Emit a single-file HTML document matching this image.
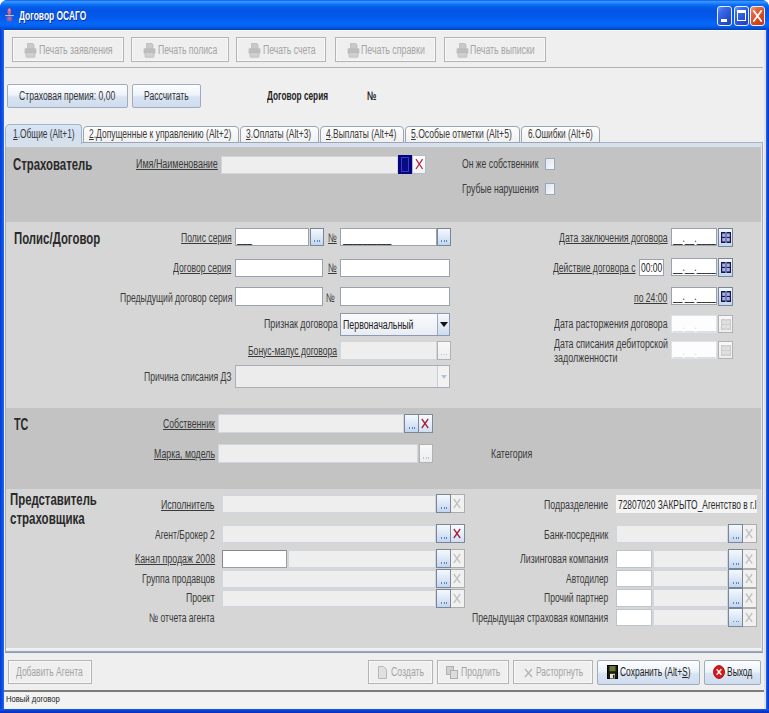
<!DOCTYPE html>
<html lang="ru"><head><meta charset="utf-8"><title>Договор ОСАГО</title>
<style>
html,body{margin:0;padding:0;}
body{width:769px;height:713px;position:relative;overflow:hidden;background:#fff;font-family:"Liberation Sans",sans-serif;}
div{position:absolute;box-sizing:border-box;}
.t{position:absolute;white-space:nowrap;transform-origin:0 50%;display:inline-block;}
.btn{border:1px solid #9eacbf;border-radius:2px;background:linear-gradient(#fdfeff 0%,#eef3fa 45%,#d9e4f2 55%,#cfdcee 100%);}
.btnd{border:1px solid #b9b9b9;border-radius:2px;background:linear-gradient(#f6f6f6,#ececec);}
.fw{background:#fff;border:1px solid #9aa3ad;}
.fg{background:#eeeeee;border:1px solid #cfd6de;}
.sb{border:1px solid #7a8696;background:linear-gradient(#f3f8fd 0%,#dde8f6 50%,#c2d6ef 100%);}
.sbd{border:1px solid #b2b2b2;background:linear-gradient(#f8f8f8,#ededed);}
.fw2{background:#fff;border:1px solid #bcc4cc;}

</style></head>
<body>
<div class="" style="left:0px;top:0px;width:769px;height:713px;background:#0a3fd8;border-radius:8px 8px 0 0;"></div>
<div class="" style="left:0px;top:0px;width:769px;height:29.5px;border-radius:7px 7px 0 0;background:linear-gradient(#0058ee 0%,#3a93ff 5%,#2a8bff 9%,#0f74f8 14%,#0561ec 22%,#0456e4 32%,#0458ea 55%,#0560f4 68%,#0668fb 78%,#0560ee 88%,#0450d4 94%,#0340b4 100%);"></div>
<div class="" style="left:0px;top:29px;width:3.5px;height:684px;background:linear-gradient(90deg,#0a3ad4,#0b54e8 60%,#2a6bf0);"></div>
<div class="" style="left:765.5px;top:29px;width:3.5px;height:684px;background:linear-gradient(90deg,#2a6bf0,#0b4fe2 40%,#0a33c0);"></div>
<div class="" style="left:0px;top:708.5px;width:769px;height:4.5px;background:linear-gradient(#1a5ff0,#0a3fd8 40%,#0a2fb0);"></div>
<div class="" style="left:3.5px;top:29.5px;width:762.0px;height:679.0px;background:#efefef;border-top:1px solid #fafafa;border-right:2.5px solid #dde1e8;"></div>
<svg style="position:absolute;left:4px;top:7px" width="11" height="16" viewBox="0 0 11 16"><ellipse cx="5.3" cy="4.6" rx="1.8" ry="3.4" fill="#d8607c"/><ellipse cx="5.3" cy="3" rx="1" ry="1.6" fill="#ee8c8c"/><rect x="1.2" y="8" width="8.6" height="1.1" fill="#c9bfe6"/><rect x="2.6" y="9.3" width="5.6" height="5.2" rx="1.5" fill="#7a5cae"/><rect x="3.8" y="10" width="3.2" height="3" fill="#a86a9a"/></svg>
<div class="" style="left:717px;top:6px;width:15px;height:20px;border:1px solid #e8eefc;border-radius:3px;background:linear-gradient(135deg,#6a9af8 0%,#3a6ae8 25%,#2a52d8 60%,#1c3fc0 100%);"></div>
<div class="" style="left:734px;top:6px;width:15px;height:20px;border:1px solid #e8eefc;border-radius:3px;background:linear-gradient(135deg,#6a9af8 0%,#3a6ae8 25%,#2a52d8 60%,#1c3fc0 100%);"></div>
<div class="" style="left:750px;top:6px;width:15px;height:20px;border:1px solid #e8eefc;border-radius:3px;background:linear-gradient(135deg,#f0a080 0%,#e26a40 25%,#d8481c 60%,#c03a14 100%);"></div>
<div class="" style="left:721px;top:19px;width:6px;height:3px;background:#fff;"></div>
<div class="" style="left:737px;top:10px;width:9px;height:11px;border:1.5px solid #fff;border-top:3px solid #fff;"></div>
<svg style="position:absolute;left:752px;top:9px" width="11" height="14" viewBox="0 0 11 14"><path d="M1.8 2 L9.2 12 M9.2 2 L1.8 12" stroke="#fff" stroke-width="1.8" fill="none" stroke-linecap="round"/></svg>
<div class="" style="left:5px;top:67px;width:758px;height:1px;background:#b0b0b0;"></div>
<div class="" style="left:12px;top:37px;width:112px;height:25px;border:1px solid #b4b4b4;box-shadow:inset 0 0 0 1px #f8f8f8;background:#efefef;"><svg style="position:absolute;left:11px;top:4.5px" width="13" height="15" viewBox="0 0 13 15"><path d="M3.5 0.5 h5.5 l1 1 v4 h-6.5z" fill="#c9c9c9" stroke="#b0b0b0" stroke-width=".6"/><rect x="0.6" y="5.2" width="11.8" height="5.6" rx="1.2" fill="#bdbdbd"/><rect x="2" y="9.5" width="9" height="4.8" rx=".8" fill="#cfcfcf" stroke="#b4b4b4" stroke-width=".6"/></svg></div>
<div class="" style="left:131px;top:37px;width:98px;height:25px;border:1px solid #b4b4b4;box-shadow:inset 0 0 0 1px #f8f8f8;background:#efefef;"><svg style="position:absolute;left:11px;top:4.5px" width="13" height="15" viewBox="0 0 13 15"><path d="M3.5 0.5 h5.5 l1 1 v4 h-6.5z" fill="#c9c9c9" stroke="#b0b0b0" stroke-width=".6"/><rect x="0.6" y="5.2" width="11.8" height="5.6" rx="1.2" fill="#bdbdbd"/><rect x="2" y="9.5" width="9" height="4.8" rx=".8" fill="#cfcfcf" stroke="#b4b4b4" stroke-width=".6"/></svg></div>
<div class="" style="left:236px;top:37px;width:90px;height:25px;border:1px solid #b4b4b4;box-shadow:inset 0 0 0 1px #f8f8f8;background:#efefef;"><svg style="position:absolute;left:11px;top:4.5px" width="13" height="15" viewBox="0 0 13 15"><path d="M3.5 0.5 h5.5 l1 1 v4 h-6.5z" fill="#c9c9c9" stroke="#b0b0b0" stroke-width=".6"/><rect x="0.6" y="5.2" width="11.8" height="5.6" rx="1.2" fill="#bdbdbd"/><rect x="2" y="9.5" width="9" height="4.8" rx=".8" fill="#cfcfcf" stroke="#b4b4b4" stroke-width=".6"/></svg></div>
<div class="" style="left:335px;top:37px;width:101px;height:25px;border:1px solid #b4b4b4;box-shadow:inset 0 0 0 1px #f8f8f8;background:#efefef;"><svg style="position:absolute;left:11px;top:4.5px" width="13" height="15" viewBox="0 0 13 15"><path d="M3.5 0.5 h5.5 l1 1 v4 h-6.5z" fill="#c9c9c9" stroke="#b0b0b0" stroke-width=".6"/><rect x="0.6" y="5.2" width="11.8" height="5.6" rx="1.2" fill="#bdbdbd"/><rect x="2" y="9.5" width="9" height="4.8" rx=".8" fill="#cfcfcf" stroke="#b4b4b4" stroke-width=".6"/></svg></div>
<div class="" style="left:444px;top:37px;width:102px;height:25px;border:1px solid #b4b4b4;box-shadow:inset 0 0 0 1px #f8f8f8;background:#efefef;"><svg style="position:absolute;left:11px;top:4.5px" width="13" height="15" viewBox="0 0 13 15"><path d="M3.5 0.5 h5.5 l1 1 v4 h-6.5z" fill="#c9c9c9" stroke="#b0b0b0" stroke-width=".6"/><rect x="0.6" y="5.2" width="11.8" height="5.6" rx="1.2" fill="#bdbdbd"/><rect x="2" y="9.5" width="9" height="4.8" rx=".8" fill="#cfcfcf" stroke="#b4b4b4" stroke-width=".6"/></svg></div>
<div class="btn" style="left:7px;top:83.5px;width:120.5px;height:24.0px;"></div>
<div class="btn" style="left:132px;top:83.5px;width:69px;height:24.0px;"></div>
<div class="" style="left:5px;top:142px;width:758px;height:510px;background:#e4e8ec;border:1px solid #a4acb8;"></div>
<div class="" style="left:5px;top:142px;width:758px;height:5px;background:#d7e1ed;border-top:1px solid #a9b5c5;border-left:1px solid #a9b5c5;border-right:1px solid #a9b5c5;"></div>
<div class="" style="left:5px;top:124px;width:77px;height:20px;border:1px solid #a3b3c9;border-bottom:none;border-radius:5px 4px 0 0;background:linear-gradient(#d9e6f5,#d2dfef 50%,#d7e1ed);"></div>
<div class="" style="left:83px;top:126px;width:156px;height:17px;border:1px solid #9aa6b6;border-radius:4px 4px 0 0;background:linear-gradient(#fdfdfd,#f1f1f1);"></div>
<div class="" style="left:240px;top:126px;width:79px;height:17px;border:1px solid #9aa6b6;border-radius:4px 4px 0 0;background:linear-gradient(#fdfdfd,#f1f1f1);"></div>
<div class="" style="left:320px;top:126px;width:84px;height:17px;border:1px solid #9aa6b6;border-radius:4px 4px 0 0;background:linear-gradient(#fdfdfd,#f1f1f1);"></div>
<div class="" style="left:405px;top:126px;width:115px;height:17px;border:1px solid #9aa6b6;border-radius:4px 4px 0 0;background:linear-gradient(#fdfdfd,#f1f1f1);"></div>
<div class="" style="left:521px;top:126px;width:79px;height:17px;border:1px solid #9aa6b6;border-radius:4px 4px 0 0;background:linear-gradient(#fdfdfd,#f1f1f1);"></div>
<div class="" style="left:6px;top:147px;width:755px;height:75px;background:#c3c3c3;"></div>
<div class="" style="left:6px;top:222px;width:755px;height:186px;background:#d6d6d6;"></div>
<div class="" style="left:6px;top:408px;width:755px;height:81px;background:#c3c3c3;"></div>
<div class="" style="left:6px;top:489px;width:755px;height:159px;background:#d6d6d6;"></div>
<div class="" style="left:6px;top:648px;width:755px;height:2px;background:#eef2f6;"></div>
<div class="fg" style="left:221px;top:156px;width:177px;height:18px;"></div>
<div class="" style="left:398px;top:155px;width:13.600000000000023px;height:18.5px;background:#06067c;"><i style="position:absolute;left:3px;top:1.5px;width:5.5px;height:13.5px;border:1px solid #3a3ad2;background:#0a0a84;"></i></div>
<div class="" style="left:411.5px;top:155px;width:14.199999999999989px;height:18.5px;border:1px solid #b4bcc8;background:linear-gradient(#fbfcfe,#eef2f8);"><svg style="position:absolute;left:0;top:0" width="12" height="16" viewBox="0 0 12 16"><path d="M3 3.2 L9.6 13 M9.6 3.2 L3 13" stroke="#b02a3c" stroke-width="1.25" fill="none"/></svg></div>
<div class="" style="left:545px;top:158px;width:10px;height:12px;border:1px solid #98a8bc;background:linear-gradient(135deg,#dfe6ee,#f8fafc);"></div>
<div class="" style="left:545px;top:183px;width:10px;height:12px;border:1px solid #98a8bc;background:linear-gradient(135deg,#dfe6ee,#f8fafc);"></div>
<div class="fw" style="left:235px;top:228px;width:74px;height:18px;"></div>
<div class="sb" style="left:310px;top:228px;width:14px;height:18px;"><i style="position:absolute;left:50%;bottom:3.5px;margin-left:-3px;width:7px;height:1.2px;background:repeating-linear-gradient(90deg,#5f86c2 0 1.2px,transparent 1.2px 2.6px);"></i></div>
<div class="fw" style="left:340px;top:228px;width:97px;height:18px;"></div>
<div class="sb" style="left:437px;top:228px;width:14px;height:18px;"><i style="position:absolute;left:50%;bottom:3.5px;margin-left:-3px;width:7px;height:1.2px;background:repeating-linear-gradient(90deg,#5f86c2 0 1.2px,transparent 1.2px 2.6px);"></i></div>
<div class="fw" style="left:235px;top:258.5px;width:88px;height:18.0px;"></div>
<div class="fw" style="left:340px;top:258.5px;width:110px;height:18.0px;"></div>
<div class="fw" style="left:235px;top:287px;width:88px;height:18.5px;"></div>
<div class="fw" style="left:340px;top:287px;width:110px;height:18.5px;"></div>
<div class="" style="left:340px;top:312.5px;width:110px;height:23.0px;border:1px solid #8a9ab4;background:linear-gradient(#fafbfd,#e9edf3);"></div>
<div class="" style="left:437px;top:313.5px;width:12px;height:21.0px;border-left:1px solid #9aaac0;background:linear-gradient(#f6f9fd,#cfdcee);"><i style="position:absolute;left:2px;top:8px;border-left:4px solid transparent;border-right:4px solid transparent;border-top:5px solid #111;"></i></div>
<div class="fg" style="left:340px;top:341px;width:97px;height:18.5px;"></div>
<div class="sbd" style="left:436.5px;top:341px;width:14.0px;height:18.5px;"><i style="position:absolute;left:50%;bottom:3.5px;margin-left:-3px;width:7px;height:1.2px;background:repeating-linear-gradient(90deg,#bcc8d8 0 1.2px,transparent 1.2px 2.6px);"></i></div>
<div class="" style="left:235px;top:365px;width:215px;height:23px;border:1px solid #a8aeb6;background:#ececec;"></div>
<div class="" style="left:437px;top:366px;width:12px;height:21px;border-left:1px solid #c8ced6;background:#f2f2f2;"><i style="position:absolute;left:3px;top:9px;border-left:3.5px solid transparent;border-right:3.5px solid transparent;border-top:4px solid #b4c4d8;"></i></div>
<div class="fw" style="left:671px;top:228px;width:46px;height:18px;"></div>
<div class="sb" style="left:717.5px;top:227.5px;width:15.5px;height:19.0px;"><svg style="position:absolute;left:2px;top:3px" width="10" height="11" viewBox="0 0 10 11"><rect x="0" y="0" width="10" height="11" fill="#14184a"/><rect x="1.2" y="1.5" width="3" height="3.4" fill="#a6aef0"/><rect x="5.8" y="1.5" width="3" height="3.4" fill="#a6aef0"/><rect x="1.2" y="6" width="3" height="3.4" fill="#a6aef0"/><rect x="5.8" y="6" width="3" height="3.4" fill="#a6aef0"/><rect x="4.6" y="0" width=".8" height="11" fill="#e8ecf8"/></svg></div>
<div class="fw" style="left:639px;top:259px;width:25px;height:17px;"></div>
<div class="fw" style="left:671px;top:257.5px;width:46px;height:18.0px;"></div>
<div class="sb" style="left:717.5px;top:257.5px;width:15.5px;height:19.5px;"><svg style="position:absolute;left:2px;top:3px" width="10" height="11" viewBox="0 0 10 11"><rect x="0" y="0" width="10" height="11" fill="#14184a"/><rect x="1.2" y="1.5" width="3" height="3.4" fill="#a6aef0"/><rect x="5.8" y="1.5" width="3" height="3.4" fill="#a6aef0"/><rect x="1.2" y="6" width="3" height="3.4" fill="#a6aef0"/><rect x="5.8" y="6" width="3" height="3.4" fill="#a6aef0"/><rect x="4.6" y="0" width=".8" height="11" fill="#e8ecf8"/></svg></div>
<div class="fw" style="left:671px;top:287px;width:46px;height:18px;"></div>
<div class="sb" style="left:717.5px;top:287px;width:15.5px;height:19px;"><svg style="position:absolute;left:2px;top:3px" width="10" height="11" viewBox="0 0 10 11"><rect x="0" y="0" width="10" height="11" fill="#14184a"/><rect x="1.2" y="1.5" width="3" height="3.4" fill="#a6aef0"/><rect x="5.8" y="1.5" width="3" height="3.4" fill="#a6aef0"/><rect x="1.2" y="6" width="3" height="3.4" fill="#a6aef0"/><rect x="5.8" y="6" width="3" height="3.4" fill="#a6aef0"/><rect x="4.6" y="0" width=".8" height="11" fill="#e8ecf8"/></svg></div>
<div class="" style="left:671px;top:314.5px;width:46px;height:18.5px;background:#fdfdfd;border:1px solid #dde3ec;"></div>
<div class="sbd" style="left:717.5px;top:314.5px;width:15.0px;height:18.5px;"><svg style="position:absolute;left:2px;top:3px" width="10" height="11" viewBox="0 0 10 11"><rect x="0" y="0" width="10" height="11" fill="#cccccc"/><rect x="1.2" y="1.5" width="3" height="3.4" fill="#e2e2e2"/><rect x="5.8" y="1.5" width="3" height="3.4" fill="#e2e2e2"/><rect x="1.2" y="6" width="3" height="3.4" fill="#e2e2e2"/><rect x="5.8" y="6" width="3" height="3.4" fill="#e2e2e2"/><rect x="4.6" y="0" width=".8" height="11" fill="#e8e8e8"/></svg></div>
<div class="" style="left:671px;top:340.5px;width:46px;height:18.5px;background:#fdfdfd;border:1px solid #dde3ec;"></div>
<div class="sbd" style="left:717.5px;top:340.5px;width:15.0px;height:18.5px;"><svg style="position:absolute;left:2px;top:3px" width="10" height="11" viewBox="0 0 10 11"><rect x="0" y="0" width="10" height="11" fill="#cccccc"/><rect x="1.2" y="1.5" width="3" height="3.4" fill="#e2e2e2"/><rect x="5.8" y="1.5" width="3" height="3.4" fill="#e2e2e2"/><rect x="1.2" y="6" width="3" height="3.4" fill="#e2e2e2"/><rect x="5.8" y="6" width="3" height="3.4" fill="#e2e2e2"/><rect x="4.6" y="0" width=".8" height="11" fill="#e8e8e8"/></svg></div>
<div class="fg" style="left:218px;top:414px;width:186px;height:19px;"></div>
<div class="sb" style="left:404px;top:414px;width:15px;height:19px;"><i style="position:absolute;left:50%;bottom:3.5px;margin-left:-3px;width:7px;height:1.2px;background:repeating-linear-gradient(90deg,#5f86c2 0 1.2px,transparent 1.2px 2.6px);"></i></div>
<div class="" style="left:419px;top:414px;width:14px;height:19px;border:1px solid #7f8a98;border-left:none;background:linear-gradient(#f8fbfe,#e6eef9 55%,#cfdff3);"><svg style="position:absolute;left:0;top:0" width="12" height="17" viewBox="0 0 12 17"><path d="M2.8 4.0 L9.2 13.0 M9.2 4.0 L2.8 13.0" stroke="#a3243a" stroke-width="1.3" fill="none"/></svg></div>
<div class="fg" style="left:218px;top:444px;width:200px;height:19px;"></div>
<div class="sbd" style="left:419px;top:444px;width:14px;height:19px;"><i style="position:absolute;left:50%;bottom:3.5px;margin-left:-3px;width:7px;height:1.2px;background:repeating-linear-gradient(90deg,#bcc8d8 0 1.2px,transparent 1.2px 2.6px);"></i></div>
<div class="fg" style="left:222px;top:495px;width:214px;height:18px;"></div>
<div class="sb" style="left:436px;top:494px;width:15px;height:19px;"><i style="position:absolute;left:50%;bottom:3.5px;margin-left:-3px;width:7px;height:1.2px;background:repeating-linear-gradient(90deg,#5f86c2 0 1.2px,transparent 1.2px 2.6px);"></i></div>
<div class="" style="left:451px;top:494px;width:14px;height:19px;border:1px solid #adadad;border-left:none;background:#f1f1f1;"><svg style="position:absolute;left:0;top:0" width="12" height="17" viewBox="0 0 12 17"><path d="M2.8 4.0 L9.2 13.0 M9.2 4.0 L2.8 13.0" stroke="#c2c2c2" stroke-width="1.3" fill="none"/></svg></div>
<div class="fg" style="left:222px;top:525px;width:214px;height:18px;"></div>
<div class="sb" style="left:436px;top:524px;width:15px;height:19px;"><i style="position:absolute;left:50%;bottom:3.5px;margin-left:-3px;width:7px;height:1.2px;background:repeating-linear-gradient(90deg,#5f86c2 0 1.2px,transparent 1.2px 2.6px);"></i></div>
<div class="" style="left:451px;top:524px;width:14px;height:19px;border:1px solid #7f8a98;border-left:none;background:linear-gradient(#f8fbfe,#e6eef9 55%,#cfdff3);"><svg style="position:absolute;left:0;top:0" width="12" height="17" viewBox="0 0 12 17"><path d="M2.8 4.0 L9.2 13.0 M9.2 4.0 L2.8 13.0" stroke="#a3243a" stroke-width="1.3" fill="none"/></svg></div>
<div class="" style="left:222px;top:549.5px;width:65px;height:18.0px;background:#fff;border:1px solid #9a9ea4;border-top-color:#85898f;border-left-color:#85898f;"></div>
<div class="fg" style="left:288px;top:550px;width:148px;height:18px;"></div>
<div class="sb" style="left:436px;top:549px;width:15px;height:19px;"><i style="position:absolute;left:50%;bottom:3.5px;margin-left:-3px;width:7px;height:1.2px;background:repeating-linear-gradient(90deg,#5f86c2 0 1.2px,transparent 1.2px 2.6px);"></i></div>
<div class="" style="left:451px;top:549px;width:14px;height:19px;border:1px solid #adadad;border-left:none;background:#f1f1f1;"><svg style="position:absolute;left:0;top:0" width="12" height="17" viewBox="0 0 12 17"><path d="M2.8 4.0 L9.2 13.0 M9.2 4.0 L2.8 13.0" stroke="#c2c2c2" stroke-width="1.3" fill="none"/></svg></div>
<div class="fg" style="left:222px;top:570px;width:214px;height:18px;"></div>
<div class="sb" style="left:436px;top:569px;width:15px;height:19px;"><i style="position:absolute;left:50%;bottom:3.5px;margin-left:-3px;width:7px;height:1.2px;background:repeating-linear-gradient(90deg,#5f86c2 0 1.2px,transparent 1.2px 2.6px);"></i></div>
<div class="" style="left:451px;top:569px;width:14px;height:19px;border:1px solid #adadad;border-left:none;background:#f1f1f1;"><svg style="position:absolute;left:0;top:0" width="12" height="17" viewBox="0 0 12 17"><path d="M2.8 4.0 L9.2 13.0 M9.2 4.0 L2.8 13.0" stroke="#c2c2c2" stroke-width="1.3" fill="none"/></svg></div>
<div class="fg" style="left:222px;top:590px;width:214px;height:17px;"></div>
<div class="sb" style="left:436px;top:589px;width:15px;height:19px;"><i style="position:absolute;left:50%;bottom:3.5px;margin-left:-3px;width:7px;height:1.2px;background:repeating-linear-gradient(90deg,#5f86c2 0 1.2px,transparent 1.2px 2.6px);"></i></div>
<div class="" style="left:451px;top:589px;width:14px;height:19px;border:1px solid #adadad;border-left:none;background:#f1f1f1;"><svg style="position:absolute;left:0;top:0" width="12" height="17" viewBox="0 0 12 17"><path d="M2.8 4.0 L9.2 13.0 M9.2 4.0 L2.8 13.0" stroke="#c2c2c2" stroke-width="1.3" fill="none"/></svg></div>
<div class="" style="left:616px;top:495px;width:141px;height:18px;background:#f4f4f4;"></div>
<div class="fg" style="left:616px;top:525px;width:112px;height:18px;"></div>
<div class="sb" style="left:728px;top:524px;width:15px;height:19px;"><i style="position:absolute;left:50%;bottom:3.5px;margin-left:-3px;width:7px;height:1.2px;background:repeating-linear-gradient(90deg,#5f86c2 0 1.2px,transparent 1.2px 2.6px);"></i></div>
<div class="" style="left:743px;top:524px;width:14px;height:19px;border:1px solid #adadad;border-left:none;background:#f1f1f1;"><svg style="position:absolute;left:0;top:0" width="12" height="17" viewBox="0 0 12 17"><path d="M2.8 4.0 L9.2 13.0 M9.2 4.0 L2.8 13.0" stroke="#c2c2c2" stroke-width="1.3" fill="none"/></svg></div>
<div class="fw2" style="left:616px;top:550px;width:36px;height:18px;"></div>
<div class="fg" style="left:653px;top:550px;width:75px;height:18px;"></div>
<div class="sb" style="left:728px;top:549px;width:15px;height:20px;"><i style="position:absolute;left:50%;bottom:3.5px;margin-left:-3px;width:7px;height:1.2px;background:repeating-linear-gradient(90deg,#5f86c2 0 1.2px,transparent 1.2px 2.6px);"></i></div>
<div class="" style="left:743px;top:549px;width:14px;height:20px;border:1px solid #adadad;border-left:none;background:#f1f1f1;"><svg style="position:absolute;left:0;top:0" width="12" height="18" viewBox="0 0 12 18"><path d="M2.8 4.5 L9.2 13.5 M9.2 4.5 L2.8 13.5" stroke="#c2c2c2" stroke-width="1.3" fill="none"/></svg></div>
<div class="fw2" style="left:616px;top:570px;width:36px;height:17px;"></div>
<div class="fg" style="left:653px;top:570px;width:75px;height:17px;"></div>
<div class="sb" style="left:728px;top:569px;width:15px;height:19px;"><i style="position:absolute;left:50%;bottom:3.5px;margin-left:-3px;width:7px;height:1.2px;background:repeating-linear-gradient(90deg,#5f86c2 0 1.2px,transparent 1.2px 2.6px);"></i></div>
<div class="" style="left:743px;top:569px;width:14px;height:19px;border:1px solid #adadad;border-left:none;background:#f1f1f1;"><svg style="position:absolute;left:0;top:0" width="12" height="17" viewBox="0 0 12 17"><path d="M2.8 4.0 L9.2 13.0 M9.2 4.0 L2.8 13.0" stroke="#c2c2c2" stroke-width="1.3" fill="none"/></svg></div>
<div class="fw2" style="left:616px;top:589px;width:36px;height:18px;"></div>
<div class="fg" style="left:653px;top:589px;width:75px;height:18px;"></div>
<div class="sb" style="left:728px;top:588px;width:15px;height:20px;"><i style="position:absolute;left:50%;bottom:3.5px;margin-left:-3px;width:7px;height:1.2px;background:repeating-linear-gradient(90deg,#5f86c2 0 1.2px,transparent 1.2px 2.6px);"></i></div>
<div class="" style="left:743px;top:588px;width:14px;height:20px;border:1px solid #adadad;border-left:none;background:#f1f1f1;"><svg style="position:absolute;left:0;top:0" width="12" height="18" viewBox="0 0 12 18"><path d="M2.8 4.5 L9.2 13.5 M9.2 4.5 L2.8 13.5" stroke="#c2c2c2" stroke-width="1.3" fill="none"/></svg></div>
<div class="fw2" style="left:616px;top:608.5px;width:36px;height:17.0px;"></div>
<div class="fg" style="left:653px;top:608.5px;width:75px;height:17.0px;"></div>
<div class="sb" style="left:728px;top:607.5px;width:15px;height:19.0px;"><i style="position:absolute;left:50%;bottom:3.5px;margin-left:-3px;width:7px;height:1.2px;background:repeating-linear-gradient(90deg,#5f86c2 0 1.2px,transparent 1.2px 2.6px);"></i></div>
<div class="" style="left:743px;top:607.5px;width:14px;height:19.0px;border:1px solid #adadad;border-left:none;background:#f1f1f1;"><svg style="position:absolute;left:0;top:0" width="12" height="17.0" viewBox="0 0 12 17.0"><path d="M2.8 4.0 L9.2 13.0 M9.2 4.0 L2.8 13.0" stroke="#c2c2c2" stroke-width="1.3" fill="none"/></svg></div>
<div class="" style="left:5px;top:652px;width:758px;height:38px;background:#efefef;border-top:1px solid #8a9aae;"></div>
<div class="" style="left:4px;top:689.5px;width:759.5px;height:2.0px;background:#7c7c7c;"></div>
<div class="" style="left:4px;top:691.5px;width:759.5px;height:16.0px;background:#f3f3f3;"></div>
<div class="" style="left:7.5px;top:659.5px;width:84.5px;height:24.5px;border:1px solid #b4b4b4;box-shadow:inset 0 0 0 1px #f8f8f8;background:#efefef;"></div>
<div class="" style="left:368px;top:659.5px;width:65px;height:24.5px;border:1px solid #b4b4b4;box-shadow:inset 0 0 0 1px #f8f8f8;background:#efefef;"><svg style="position:absolute;left:9px;top:5px" width="9" height="13" viewBox="0 0 9 13"><path d="M.5 .5h5l3 3v9h-8z" fill="#e0e0e0" stroke="#b8b8b8"/></svg></div>
<div class="" style="left:437px;top:659.5px;width:72px;height:24.5px;border:1px solid #b4b4b4;box-shadow:inset 0 0 0 1px #f8f8f8;background:#efefef;"><svg style="position:absolute;left:8px;top:5px" width="12" height="13" viewBox="0 0 12 13"><rect x=".5" y=".5" width="7" height="8" fill="#d0d0d0" stroke="#b0b0b0"/><rect x="4.5" y="4.5" width="7" height="8" fill="#dcdcdc" stroke="#b0b0b0"/></svg></div>
<div class="" style="left:513px;top:659.5px;width:80px;height:24.5px;border:1px solid #b4b4b4;box-shadow:inset 0 0 0 1px #f8f8f8;background:#efefef;"><svg style="position:absolute;left:10px;top:7px" width="9" height="10" viewBox="0 0 9 10"><path d="M1 1L8 9M8 1L1 9" stroke="#b4b4b4" stroke-width="1.3"/></svg></div>
<div class="btn" style="left:597px;top:659.5px;width:103px;height:25.0px;"><svg style="position:absolute;left:8.5px;top:4.2px" width="11" height="14.5" viewBox="0 0 11 14" preserveAspectRatio="none"><rect x=".5" y=".5" width="10" height="13" fill="#1a1a1a" stroke="#000"/><rect x="2.5" y="1" width="6" height="5" fill="#6a7a30"/><rect x="3" y="8.5" width="5" height="4.5" fill="#e8e8c0"/><rect x="6" y="9.5" width="1.5" height="3" fill="#222"/></svg></div>
<div class="btn" style="left:704px;top:659.5px;width:57px;height:25.0px;"><svg style="position:absolute;left:7.6px;top:4.7px" width="12" height="14" viewBox="0 0 12 13" preserveAspectRatio="none"><ellipse cx="6" cy="6.5" rx="5.5" ry="6" fill="#d81818"/><ellipse cx="6" cy="6.5" rx="5.5" ry="6" fill="none" stroke="#a00808" stroke-width=".8"/><path d="M3.7 4L8.3 9M8.3 4L3.7 9" stroke="#fff" stroke-width="1.5"/></svg></div>
<span class="t" style="left:18.5px;top:8.1px;font-size:13px;line-height:16.9px;color:#fff;font-weight:bold;transform:scaleX(0.6490);text-shadow:1px 1px 0 #0a2a8a;">Договор ОСАГО</span>
<span class="t" style="left:38.5px;top:42.4px;font-size:12.5px;line-height:16.2px;color:#a4a4a4;transform:scaleX(0.7000);">Печать заявления</span>
<span class="t" style="left:157.5px;top:42.4px;font-size:12.5px;line-height:16.2px;color:#a4a4a4;transform:scaleX(0.6941);">Печать полиса</span>
<span class="t" style="left:262.5px;top:42.4px;font-size:12.5px;line-height:16.2px;color:#a4a4a4;transform:scaleX(0.6908);">Печать счета</span>
<span class="t" style="left:361px;top:42.4px;font-size:12.5px;line-height:16.2px;color:#a4a4a4;transform:scaleX(0.7056);">Печать справки</span>
<span class="t" style="left:470px;top:42.4px;font-size:12.5px;line-height:16.2px;color:#a4a4a4;transform:scaleX(0.6989);">Печать выписки</span>
<span class="t" style="left:19px;top:88.4px;font-size:12.5px;line-height:16.2px;color:#333;transform:scaleX(0.6893);">Страховая премия: 0,00</span>
<span class="t" style="left:144px;top:88.4px;font-size:12.5px;line-height:16.2px;color:#333;transform:scaleX(0.6846);">Рассчитать</span>
<span class="t" style="left:267px;top:88.4px;font-size:12.5px;line-height:16.2px;color:#222;font-weight:bold;transform:scaleX(0.6630);">Договор серия</span>
<span class="t" style="left:366.5px;top:88.4px;font-size:12.5px;line-height:16.2px;color:#222;font-weight:bold;transform:scaleX(0.6786);">№</span>
<span class="t" style="left:12.5px;top:126.1px;font-size:12.5px;line-height:16.2px;color:#3a3a3a;transform:scaleX(0.6685);"><u>1</u>.Общие (Alt+1)</span>
<span class="t" style="left:88.5px;top:126.1px;font-size:12.5px;line-height:16.2px;color:#3a3a3a;transform:scaleX(0.6786);"><u>2</u>.Допущенные к управлению (Alt+2)</span>
<span class="t" style="left:246px;top:126.1px;font-size:12.5px;line-height:16.2px;color:#3a3a3a;transform:scaleX(0.6771);"><u>3</u>.Оплаты (Alt+3)</span>
<span class="t" style="left:325.5px;top:126.1px;font-size:12.5px;line-height:16.2px;color:#3a3a3a;transform:scaleX(0.6779);"><u>4</u>.Выплаты (Alt+4)</span>
<span class="t" style="left:411px;top:126.1px;font-size:12.5px;line-height:16.2px;color:#3a3a3a;transform:scaleX(0.6884);"><u>5</u>.Особые отметки (Alt+5)</span>
<span class="t" style="left:527.5px;top:126.1px;font-size:12.5px;line-height:16.2px;color:#3a3a3a;transform:scaleX(0.6649);">6.Ошибки (Alt+6)</span>
<span class="t" style="left:13px;top:153.4px;font-size:17px;line-height:22.1px;color:#2a2a2a;font-weight:bold;transform:scaleX(0.6681);margin-top:0.4px;">Страхователь</span>
<span class="t" style="left:13.5px;top:227.4px;font-size:17px;line-height:22.1px;color:#2a2a2a;font-weight:bold;transform:scaleX(0.6705);margin-top:0.4px;">Полис/Договор</span>
<span class="t" style="left:13.5px;top:413.6px;font-size:17px;line-height:22.1px;color:#2a2a2a;font-weight:bold;transform:scaleX(0.6304);margin-top:0.4px;">ТС</span>
<span class="t" style="left:10px;top:488.9px;font-size:17px;line-height:22.1px;color:#2a2a2a;font-weight:bold;transform:scaleX(0.6692);margin-top:0.4px;">Представитель</span>
<span class="t" style="left:10px;top:507.4px;font-size:17px;line-height:22.1px;color:#2a2a2a;font-weight:bold;transform:scaleX(0.6773);margin-top:0.4px;">страховщика</span>
<span class="t" style="left:136px;top:156.4px;font-size:12.5px;line-height:16.2px;color:#3a3a3a;text-decoration:underline;transform:scaleX(0.7149);">Имя/Наименование</span>
<span class="t" style="left:462px;top:156.4px;font-size:12.5px;line-height:16.2px;color:#3a3a3a;transform:scaleX(0.6892);">Он же собственник</span>
<span class="t" style="left:462px;top:181.4px;font-size:12.5px;line-height:16.2px;color:#3a3a3a;transform:scaleX(0.6955);">Грубые нарушения</span>
<span class="t" style="left:180.5px;top:230.4px;font-size:12.5px;line-height:16.2px;color:#3a3a3a;text-decoration:underline;transform:scaleX(0.6892);">Полис серия</span>
<span class="t" style="left:237px;top:229.9px;font-size:12.5px;line-height:16.2px;color:#222;transform:scaleX(0.7143);">___</span>
<span class="t" style="left:328px;top:230.4px;font-size:12.5px;line-height:16.2px;color:#3a3a3a;text-decoration:underline;transform:scaleX(0.6538);">№</span>
<span class="t" style="left:342.7px;top:229.9px;font-size:12.5px;line-height:16.2px;color:#222;transform:scaleX(0.6971);">__________</span>
<span class="t" style="left:173px;top:259.9px;font-size:12.5px;line-height:16.2px;color:#3a3a3a;text-decoration:underline;transform:scaleX(0.6882);">Договор серия</span>
<span class="t" style="left:328px;top:259.9px;font-size:12.5px;line-height:16.2px;color:#3a3a3a;text-decoration:underline;transform:scaleX(0.6538);">№</span>
<span class="t" style="left:119.5px;top:289.9px;font-size:12.5px;line-height:16.2px;color:#3a3a3a;transform:scaleX(0.6871);">Предыдущий договор серия</span>
<span class="t" style="left:326px;top:289.9px;font-size:12.5px;line-height:16.2px;color:#3a3a3a;transform:scaleX(0.6538);">№</span>
<span class="t" style="left:263.5px;top:316.4px;font-size:12.5px;line-height:16.2px;color:#3a3a3a;transform:scaleX(0.7067);">Признак договора</span>
<span class="t" style="left:342.5px;top:316.9px;font-size:12.5px;line-height:16.2px;color:#222;transform:scaleX(0.7050);">Первоначальный</span>
<span class="t" style="left:248px;top:342.9px;font-size:12.5px;line-height:16.2px;color:#3a3a3a;text-decoration:underline;transform:scaleX(0.6846);">Бонус-малус договора</span>
<span class="t" style="left:144px;top:368.9px;font-size:12.5px;line-height:16.2px;color:#3a3a3a;transform:scaleX(0.6890);">Причина списания ДЗ</span>
<span class="t" style="left:558.5px;top:230.4px;font-size:12.5px;line-height:16.2px;color:#3a3a3a;text-decoration:underline;transform:scaleX(0.6955);">Дата заключения договора</span>
<span class="t" style="left:672.5px;top:229.9px;font-size:12.5px;line-height:16.2px;color:#222;transform:scaleX(0.6825);">__.__.____</span>
<span class="t" style="left:552.5px;top:259.9px;font-size:12.5px;line-height:16.2px;color:#3a3a3a;text-decoration:underline;transform:scaleX(0.6818);">Действие договора с</span>
<span class="t" style="left:641px;top:259.9px;font-size:12.5px;line-height:16.2px;color:#222;transform:scaleX(0.6774);">00:00</span>
<span class="t" style="left:672.5px;top:259.4px;font-size:12.5px;line-height:16.2px;color:#222;transform:scaleX(0.6825);">__.__.____</span>
<span class="t" style="left:634px;top:289.9px;font-size:12.5px;line-height:16.2px;color:#3a3a3a;text-decoration:underline;transform:scaleX(0.6875);">по 24:00</span>
<span class="t" style="left:672.5px;top:288.4px;font-size:12.5px;line-height:16.2px;color:#222;transform:scaleX(0.6825);">__.__.____</span>
<span class="t" style="left:553.5px;top:316.4px;font-size:12.5px;line-height:16.2px;color:#3a3a3a;transform:scaleX(0.6963);">Дата расторжения договора</span>
<span class="t" style="left:672.5px;top:316.9px;font-size:12.5px;line-height:16.2px;color:#d4dae4;transform:scaleX(0.6825);">__.__.____</span>
<span class="t" style="left:553.5px;top:335.9px;font-size:12.5px;line-height:16.2px;color:#3a3a3a;transform:scaleX(0.7037);">Дата списания дебиторской</span>
<span class="t" style="left:553.5px;top:350.4px;font-size:12.5px;line-height:16.2px;color:#3a3a3a;transform:scaleX(0.7135);">задолженности</span>
<span class="t" style="left:672.5px;top:342.9px;font-size:12.5px;line-height:16.2px;color:#d4dae4;transform:scaleX(0.6825);">__.__.____</span>
<span class="t" style="left:162.5px;top:416.4px;font-size:12.5px;line-height:16.2px;color:#3a3a3a;text-decoration:underline;transform:scaleX(0.6933);">Собственник</span>
<span class="t" style="left:153.5px;top:446.4px;font-size:12.5px;line-height:16.2px;color:#3a3a3a;text-decoration:underline;transform:scaleX(0.7011);">Марка, модель</span>
<span class="t" style="left:490.5px;top:446.4px;font-size:12.5px;line-height:16.2px;color:#3a3a3a;transform:scaleX(0.7069);">Категория</span>
<span class="t" style="left:161px;top:496.9px;font-size:12.5px;line-height:16.2px;color:#3a3a3a;text-decoration:underline;transform:scaleX(0.7039);">Исполнитель</span>
<span class="t" style="left:154.5px;top:527.4px;font-size:12.5px;line-height:16.2px;color:#3a3a3a;transform:scaleX(0.6818);">Агент/Брокер 2</span>
<span class="t" style="left:134.5px;top:551.4px;font-size:12.5px;line-height:16.2px;color:#3a3a3a;text-decoration:underline;transform:scaleX(0.7080);">Канал продаж 2008</span>
<span class="t" style="left:141.5px;top:571.4px;font-size:12.5px;line-height:16.2px;color:#3a3a3a;transform:scaleX(0.6952);">Группа продавцов</span>
<span class="t" style="left:186px;top:590.4px;font-size:12.5px;line-height:16.2px;color:#3a3a3a;transform:scaleX(0.6951);">Проект</span>
<span class="t" style="left:149px;top:609.9px;font-size:12.5px;line-height:16.2px;color:#3a3a3a;transform:scaleX(0.6823);">№ отчета агента</span>
<span class="t" style="left:544px;top:496.9px;font-size:12.5px;line-height:16.2px;color:#3a3a3a;transform:scaleX(0.7033);">Подразделение</span>
<span class="t" style="left:617.5px;top:496.9px;font-size:12.5px;line-height:16.2px;color:#2a2a2a;transform:scaleX(0.6723);">72807020 ЗАКРЫТО_Агентство в г.I</span>
<span class="t" style="left:543.5px;top:527.4px;font-size:12.5px;line-height:16.2px;color:#3a3a3a;transform:scaleX(0.7011);">Банк-посредник</span>
<span class="t" style="left:520px;top:551.4px;font-size:12.5px;line-height:16.2px;color:#3a3a3a;transform:scaleX(0.7040);">Лизинговая компания</span>
<span class="t" style="left:566px;top:571.4px;font-size:12.5px;line-height:16.2px;color:#3a3a3a;transform:scaleX(0.6774);">Автодилер</span>
<span class="t" style="left:543.5px;top:590.4px;font-size:12.5px;line-height:16.2px;color:#3a3a3a;transform:scaleX(0.6862);">Прочий партнер</span>
<span class="t" style="left:472px;top:609.9px;font-size:12.5px;line-height:16.2px;color:#3a3a3a;transform:scaleX(0.6869);">Предыдущая страховая компания</span>
<span class="t" style="left:15.6px;top:663.9px;font-size:12.5px;line-height:16.2px;color:#a4a4a4;transform:scaleX(0.6827);">Добавить Агента</span>
<span class="t" style="left:390.5px;top:663.9px;font-size:12.5px;line-height:16.2px;color:#a4a4a4;transform:scaleX(0.6979);">Создать</span>
<span class="t" style="left:460.5px;top:663.9px;font-size:12.5px;line-height:16.2px;color:#a4a4a4;transform:scaleX(0.6964);">Продлить</span>
<span class="t" style="left:536px;top:663.9px;font-size:12.5px;line-height:16.2px;color:#a4a4a4;transform:scaleX(0.6690);">Расторгнуть</span>
<span class="t" style="left:620px;top:663.9px;font-size:12.5px;line-height:16.2px;color:#222;transform:scaleX(0.6779);">Сохранить (Alt+<u>S</u>)</span>
<span class="t" style="left:727px;top:663.9px;font-size:12.5px;line-height:16.2px;color:#222;transform:scaleX(0.6757);">Выход</span>
<span class="t" style="left:5.5px;top:693.6px;font-size:9px;line-height:11.7px;color:#222;transform:scaleX(0.8492);">Новый договор</span>
</body></html>
